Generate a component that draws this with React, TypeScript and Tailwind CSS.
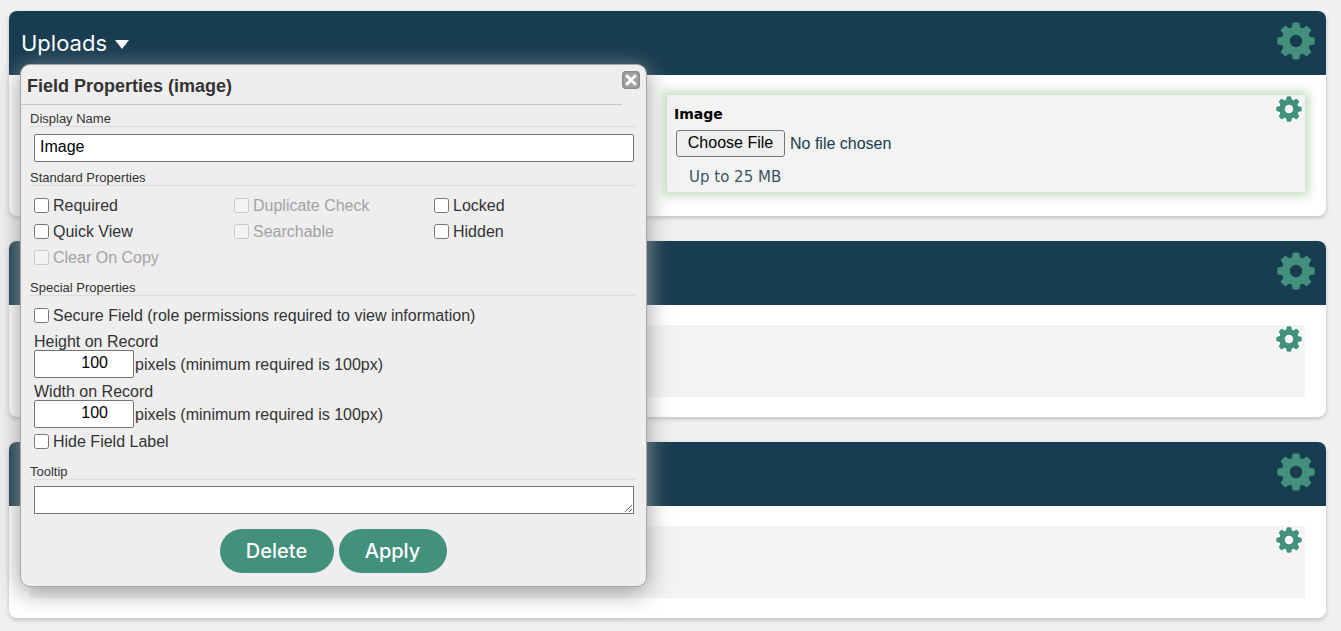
import { FC, ReactNode } from "react";

const STANDARD_PROPS = [
  { label: "Required", disabled: false },
  { label: "Duplicate Check", disabled: true },
  { label: "Locked", disabled: false },
  { label: "Quick View", disabled: false },
  { label: "Searchable", disabled: true },
  { label: "Hidden", disabled: false },
  { label: "Clear On Copy", disabled: true },
];

const TEETH = [0, 45, 90, 135, 180, 225, 270, 315];

const Gear: FC<{ className: string }> = ({ className }) => (
  <svg viewBox="0 0 38 38" className={className} aria-hidden="true">
    <circle cx="19" cy="19" r="10.2" fill="none" stroke="currentColor" strokeWidth="8" />
    {TEETH.map((deg) => (
      <path
        key={deg}
        d="M13 7.4 Q14.6 6.2 15 4.4 L15.6 1.2 Q15.8 0.4 16.6 0.4 H21.4 Q22.2 0.4 22.4 1.2 L23 4.4 Q23.4 6.2 25 7.4 Z"
        fill="currentColor"
        transform={`rotate(${deg} 19 19)`}
      />
    ))}
  </svg>
);

interface ICheck {
  label: string;
  disabled?: boolean;
}

const Check: FC<ICheck> = ({ label, disabled = false }) => (
  <label
    className={`flex h-[26px] items-center gap-1 ${disabled ? "text-[#a3a3a3]" : ""}`}
  >
    <input type="checkbox" disabled={disabled} className="mb-px size-[15px]" />
    {label}
  </label>
);

const GroupTitle: FC<{ children: ReactNode }> = ({ children }) => (
  <h3 className="ml-[9px] mr-[11px] h-4 border-b border-[#dcdcdc] text-[13px] leading-4">
    {children}
  </h3>
);

const SizeField: FC<{ id: string; label: string }> = ({ id, label }) => (
  <div className="h-[50px]">
    <label htmlFor={id} className="block h-[21px] leading-[26px]">
      {label}
    </label>
    <div className="flex items-center gap-px">
      <input
        id={id}
        type="text"
        defaultValue="100"
        className="h-7 w-[100px] rounded-xs border border-[#767676] bg-white pb-0.5 pr-[25px] text-right text-black"
      />
      <span className="pt-0.5">pixels (minimum required is 100px)</span>
    </div>
  </div>
);

interface ISection {
  title?: string;
  children: ReactNode;
}

const Section: FC<ISection> = ({ title, children }) => (
  <section className="overflow-hidden rounded-lg bg-white shadow-[0_2px_4px_rgba(0,0,0,0.2)]">
    <header className="flex h-16 items-center justify-between bg-[#183c50] pl-3 pr-[11px]">
      <h2 className="text-[22px] text-white">
        {title && (
          <button type="button" className="flex items-center gap-2">
            {title}
            <svg viewBox="0 0 14 9" className="mt-0.5 h-[9px] w-[14px]" aria-hidden="true">
              <path d="M0 0H14L7 9Z" fill="currentColor" />
            </svg>
          </button>
        )}
      </h2>
      <button type="button" aria-label="Section settings" className="pb-1 text-[#43907d]">
        <Gear className="size-[38px]" />
      </button>
    </header>
    {children}
  </section>
);

const FieldGear = () => (
  <button type="button" aria-label="Field settings" className="shrink-0 self-start text-[#43907d]">
    <Gear className="size-[26px] rounded-full bg-[#fbfbfb]" />
  </button>
);

const EmptyField = () => (
  <div className="pb-5 pl-5 pr-[21px] pt-5">
    <div className="flex h-[72px] justify-end bg-[#f3f3f2] pr-[3px] pt-px">
      <FieldGear />
    </div>
  </div>
);

const ImageField = () => (
  <div className="grid grid-cols-2 pb-6 pl-5 pr-[21px] pt-5">
    <div className="col-start-2 flex h-[97px] justify-between bg-[#f3f3f2] pl-[7px] pr-[3px] pt-px shadow-[0_0_10px_4px_#c2dfbc]">
      <div>
        <div className="pt-2 font-['DejaVu_Sans',sans-serif] text-[14px] font-bold leading-5 text-black">
          Image
        </div>
        <div className="ml-0.5 mt-1.5 flex items-center gap-[5px] font-['Liberation_Sans',Arial,sans-serif] text-[16px]">
          <button
            type="button"
            className="h-[27px] w-[109px] rounded-[3px] border border-[#767676] bg-[#efefef] pb-0.5 leading-5 text-black"
          >
            Choose File
          </button>
          <span className="text-[#183c50]">No file chosen</span>
        </div>
        <p className="ml-[15px] mt-[10px] font-['DejaVu_Sans',sans-serif] text-[15px] leading-5 text-[#3b5565]">
          Up to 25 MB
        </p>
      </div>
      <FieldGear />
    </div>
  </div>
);

const FieldProperties = () => (
  <div
    role="dialog"
    aria-labelledby="dialog-title"
    className="absolute left-5 top-[64px] w-[627px] rounded-[10px] border border-[#a6a6a6] bg-[#eeeeee] pb-[13px] font-['Liberation_Sans',Arial,sans-serif] text-[16px] leading-5 text-[#333] shadow-[0_5px_25px_#999]"
  >
    <div className="flex h-10 items-start justify-between">
      <h2
        id="dialog-title"
        className="h-10 grow border-b border-[#c8c8c8] pl-1.5 pt-[11px] text-[18px] font-bold leading-5"
      >
        Field Properties (image)
      </h2>
      <button type="button" aria-label="Close" className="mr-1.5 mt-1.5">
        <svg viewBox="0 0 18 18" className="size-[18px]">
          <rect width="18" height="18" rx="4" fill="#8c8c8c" />
          <rect x="1.5" y="1.5" width="15" height="15" rx="2.5" fill="#a2a2a2" />
          <path d="M4.2 4.2L13.8 13.8M13.8 4.2L4.2 13.8" stroke="#fff" strokeWidth="2.8" />
        </svg>
      </button>
    </div>

    <div className="pt-[6px]">
      <GroupTitle>
        <label htmlFor="display-name">Display Name</label>
      </GroupTitle>
      <div className="pl-[13px] pr-3 pt-[7px]">
        <input
          id="display-name"
          type="text"
          defaultValue="Image"
          className="block h-7 w-full rounded-xs border border-[#767676] bg-white px-[5px] pb-0.5 text-black"
        />
      </div>
    </div>

    <div className="pt-2">
      <GroupTitle>Standard Properties</GroupTitle>
      <div className="grid grid-cols-3 pl-[13px] pr-3 pt-[7px]">
        {STANDARD_PROPS.map((prop) => (
          <Check key={prop.label} {...prop} />
        ))}
      </div>
    </div>

    <div className="pt-[9px]">
      <GroupTitle>Special Properties</GroupTitle>
      <div className="pl-[13px] pr-3 pt-[7px]">
        <Check label="Secure Field (role permissions required to view information)" />
        <SizeField id="record-height" label="Height on Record" />
        <SizeField id="record-width" label="Width on Record" />
        <Check label="Hide Field Label" />
      </div>
    </div>

    <div className="pt-[9px]">
      <GroupTitle>
        <label htmlFor="tooltip">Tooltip</label>
      </GroupTitle>
      <div className="pl-[13px] pr-3 pt-[6px]">
        <textarea id="tooltip" className="block h-7 w-full border border-[#767676] bg-white px-1" />
      </div>
    </div>

    <div className="flex justify-center gap-[5px] pr-px pt-[15px] font-['Inter',sans-serif] text-[20px] font-medium text-white">
      <button type="button" className="h-11 w-[114px] rounded-full bg-[#43907d]">
        Delete
      </button>
      <button type="button" className="h-11 w-[108px] rounded-full bg-[#43907d]">
        Apply
      </button>
    </div>
  </div>
);

const App = () => {
  return (
    <div className="relative min-h-screen bg-[#f0f0f0] pb-3 pl-[9px] pr-[15px] pt-[11px] font-['Inter',sans-serif]">
      <main className="flex flex-col gap-[25px]">
        <Section title="Uploads">
          <ImageField />
        </Section>
        <Section>
          <EmptyField />
        </Section>
        <Section>
          <EmptyField />
        </Section>
      </main>
      <FieldProperties />
    </div>
  );
};

export default App;
